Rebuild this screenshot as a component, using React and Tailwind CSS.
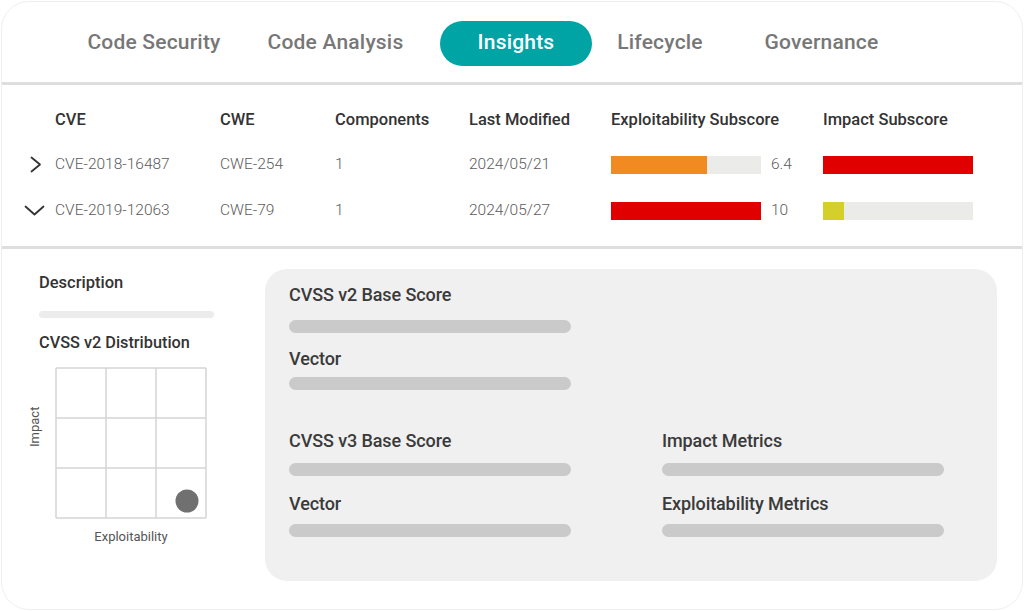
const tabs = [
  { label: 'Code Security', w: 'w-[182px]' },
  { label: 'Code Analysis', w: 'w-[181px]' },
  { label: 'Insights', w: 'w-[152px]', active: true },
  { label: 'Lifecycle', w: 'w-[136px]' },
  { label: 'Governance', w: 'w-[187px]' },
];

const rows = [
  {
    open: false,
    cve: 'CVE-2018-16487',
    cwe: 'CWE-254',
    comp: '1',
    date: '2024/05/21',
    expl: 6.4,
    explLabel: '6.4',
    explColor: 'bg-[#f28a22]',
    impact: 10,
    impactColor: 'bg-[#e10000]',
  },
  {
    open: true,
    cve: 'CVE-2019-12063',
    cwe: 'CWE-79',
    comp: '1',
    date: '2024/05/27',
    expl: 10,
    explLabel: '10',
    explColor: 'bg-[#e10000]',
    impact: 1.4,
    impactColor: 'bg-[#d4cf2a]',
  },
];

const cols = 'grid grid-cols-[53px_165px_115px_134px_142px_212px_1fr] items-center h-[20px]';

function Chevron({ open }) {
  if (open) {
    return (
      <svg width="21" height="11" viewBox="0 0 21 11" fill="none" stroke="#333" strokeWidth="1.8" strokeLinecap="round" strokeLinejoin="round">
        <path d="M1.5 1.5 L10.5 9.5 L19.5 1.5" />
      </svg>
    );
  }
  return (
    <svg width="12" height="17" viewBox="0 0 12 17" fill="none" stroke="#333" strokeWidth="1.8" strokeLinecap="round" strokeLinejoin="round">
      <path d="M1.5 1.5 L10 8.5 L1.5 15.5" />
    </svg>
  );
}

function Bar({ value, color }) {
  return (
    <div className="w-[150px] h-[18px] bg-[#ebebe9]">
      <div className={`h-full ${color}`} style={{ width: `${(value / 10) * 100}%` }} />
    </div>
  );
}

function Field({ label, gap, className = '' }) {
  return (
    <div className={className}>
      <div className="h-[17px] flex items-center text-[18px] font-medium text-[#3a3a3a] whitespace-nowrap tracking-[-0.1px]">{label}</div>
      <div className={`${gap} w-[282px] h-[13px] rounded-full bg-[#cacaca]`} />
    </div>
  );
}

function Distribution() {
  const lines = [0, 50, 100, 150];
  return (
    <div className="flex mt-[16px]">
      <div className="w-[16px] -ml-[12px] mr-[12px] h-[120px] flex items-center justify-center">
        <div className="-rotate-90 text-[13px] text-[#555] whitespace-nowrap">Impact</div>
      </div>
      <div>
        <svg width="152" height="152" viewBox="-1 -1 152 152">
          {lines.map((p) => (
            <line key={'v' + p} x1={p} y1="0" x2={p} y2="150" stroke="#d4d4d4" strokeWidth="1.5" />
          ))}
          {lines.map((p) => (
            <line key={'h' + p} x1="0" y1={p} x2="150" y2={p} stroke="#d4d4d4" strokeWidth="1.5" />
          ))}
          <circle cx="131" cy="133" r="11.5" fill="#707070" />
        </svg>
        <div className="mt-[8px] text-center text-[13px] text-[#555]">Exploitability</div>
      </div>
    </div>
  );
}

export default function App() {
  return (
    <div className="w-[1024px] h-[611px] bg-white p-px" style={{ fontFamily: 'Roboto, "Liberation Sans", sans-serif' }}>
      <div className="h-full rounded-[28px] border border-[#efefef] bg-white flex flex-col overflow-hidden">
        {/* Tabs */}
        <div className="h-[80px] flex items-center pl-[61px] pt-[2px]">
          {tabs.map((t) =>
            t.active ? (
              <div key={t.label} className={`${t.w} ml-[14px] h-[45px] rounded-full bg-[#00a4a4] text-white text-[21px] font-medium flex items-center justify-center tracking-[0.2px]`}>
                {t.label}
              </div>
            ) : (
              <div key={t.label} className={`${t.w} text-center text-[21px] font-medium text-[#777] tracking-[0.2px]`}>
                {t.label}
              </div>
            )
          )}
        </div>
        <div className="h-[3px] bg-[#dedede]" />

        {/* Table */}
        <div className="h-[161px] pt-[23px]">
          <div className={`${cols} text-[16.5px] font-medium text-[#333]`}>
            <div />
            <div>CVE</div>
            <div>CWE</div>
            <div>Components</div>
            <div>Last Modified</div>
            <div>Exploitability Subscore</div>
            <div>Impact Subscore</div>
          </div>
          <div className="mt-[25px] flex flex-col gap-[26px]">
            {rows.map((r) => (
              <div key={r.cve} className={`${cols} text-[15.5px] font-light text-[#5c5c5c]`}>
                <div className={`flex justify-center ${r.open ? 'pl-[11px]' : 'pl-[14px]'}`}>
                  <Chevron open={r.open} />
                </div>
                <div>{r.cve}</div>
                <div>{r.cwe}</div>
                <div>{r.comp}</div>
                <div>{r.date}</div>
                <div className="flex items-center">
                  <Bar value={r.expl} color={r.explColor} />
                  <span className="ml-[10px]">{r.explLabel}</span>
                </div>
                <div>
                  <Bar value={r.impact} color={r.impactColor} />
                </div>
              </div>
            ))}
          </div>
        </div>
        <div className="h-[3px] bg-[#dedede]" />

        {/* Details */}
        <div className="flex pt-[20px] pl-[37px]">
          <div className="w-[226px] pt-[6px]">
            <div className="text-[16.5px] font-medium text-[#333] leading-none">Description</div>
            <div className="mt-[19px] w-[175px] h-[7px] rounded-full bg-[#ececec]" />
            <div className="mt-[17px] text-[16.3px] font-medium text-[#333] leading-none">CVSS v2 Distribution</div>
            <Distribution />
          </div>
          <div className="w-[732px] h-[312px] rounded-[22px] bg-[#f0f0f0] pl-[24px] pt-[17px]">
            <Field label="CVSS v2 Base Score" gap="mt-[17px]" />
            <Field label="Vector" gap="mt-[10px]" className="mt-[17px]" />
            <div className="mt-[42px] grid grid-cols-[373px_282px] gap-y-[19px]">
              <Field label="CVSS v3 Base Score" gap="mt-[14px]" />
              <Field label="Impact Metrics" gap="mt-[14px]" />
              <Field label="Vector" gap="mt-[12px]" />
              <Field label="Exploitability Metrics" gap="mt-[12px]" />
            </div>
          </div>
        </div>
      </div>
    </div>
  );
}
